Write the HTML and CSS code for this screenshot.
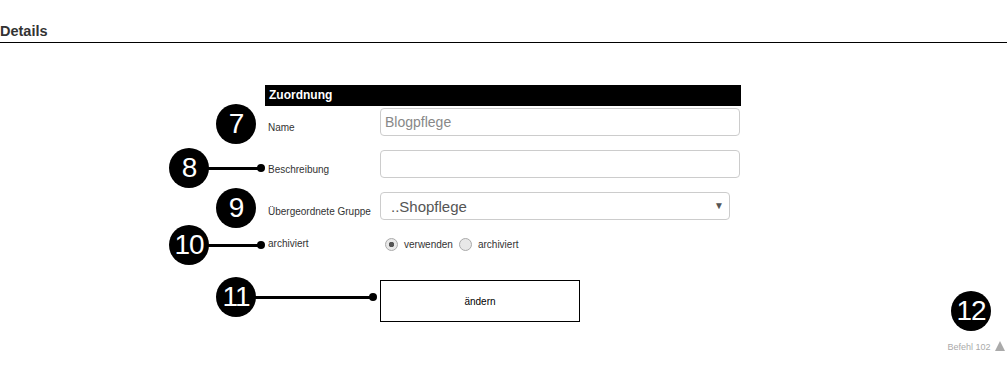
FILE: index.html
```html
<!DOCTYPE html>
<html>

<head>
  <title>Details</title>
  <link rel="stylesheet" href="styles.css">
</head>

<body>
  <div class="page">
    <h2 class="title">Details</h2>

    <div class="form">
      <div class="bar">Zuordnung</div>
      <div class="row">
        <label class="lbl">Name</label>
        <input class="field" type="text" value="Blogpflege">
      </div>
      <div class="row">
        <label class="lbl">Beschreibung</label>
        <input class="field" type="text" value="">
      </div>
      <div class="row">
        <label class="lbl">Übergeordnete Gruppe</label>
        <div class="select-wrap">
          <select class="select">
            <option>..Shopflege</option>
          </select>
        </div>
      </div>
      <div class="row radio-row">
        <label class="lbl">archiviert</label>
        <div class="radios">
          <input type="radio" name="arch" class="radio" checked> <span>verwenden</span>
          <input type="radio" name="arch" class="radio"> <span>archiviert</span>
        </div>
      </div>
      <div class="row button-row">
        <button class="butt">ändern</button>
      </div>
    </div>

    <div class="footer">Befehl 102 <span class="up"></span></div>

    <!-- callouts -->
    <div class="callout c7"><span class="num">7</span></div>
    <div class="callout c8"><span class="num">8</span><span class="line"></span><span class="dot"></span></div>
    <div class="callout c9"><span class="num">9</span></div>
    <div class="callout c10"><span class="num">10</span><span class="line"></span><span class="dot"></span></div>
    <div class="callout c11"><span class="num">11</span><span class="line"></span><span class="dot"></span></div>
    <div class="callout c12"><span class="num">12</span></div>
  </div>
</body>

</html>
```

FILE: styles.css
```css
html,
body {
  margin: 0;
  background-color: #FFFFFF;
  font-family: "Liberation Sans", Arial, sans-serif;
  color: #333333;
}

.page {
  position: relative;
  width: 1007px;
  height: 367px;
  overflow: hidden;
}

.title {
  margin: 0;
  padding: 23px 0 3px 0;
  font-size: 14.5px;
  line-height: 16px;
  font-weight: bold;
  color: #333333;
  border-bottom: 1px solid #000000;
}

.form {
  margin: 42px 0 0 265px;
  width: 476px;
}

.bar {
  height: 21px;
  line-height: 21px;
  background-color: #000000;
  color: #FFFFFF;
  font-size: 12px;
  font-weight: bold;
  padding-left: 4px;
  margin-bottom: 2px;
}

.row {
  display: flex;
  align-items: center;
  height: 28px;
  margin-bottom: 14px;
}

.lbl {
  width: 112px;
  padding-left: 3px;
  padding-top: 10px;
  font-size: 10px;
  color: #333333;
}

.field {
  box-sizing: border-box;
  width: 360px;
  height: 28px;
  margin: 0;
  padding: 0 4px;
  border: 1px solid #cccccc;
  border-radius: 4px;
  font-family: "Liberation Sans", Arial, sans-serif;
  font-size: 14px;
  color: #888888;
  outline: none;
}

.select-wrap {
  position: relative;
  width: 350px;
}

.select-wrap::after {
  content: "\25BC";
  position: absolute;
  right: 6px;
  top: 8px;
  font-size: 10px;
  color: #555555;
}

.select {
  box-sizing: border-box;
  width: 350px;
  height: 28px;
  margin: 0;
  padding: 0 10px;
  border: 1px solid #cccccc;
  border-radius: 4px;
  background: #FFFFFF;
  -webkit-appearance: none;
  appearance: none;
  font-family: "Liberation Sans", Arial, sans-serif;
  font-size: 15px;
  color: #555555;
  outline: none;
}

.radio-row {
  height: 16px;
  margin-top: 16px;
  margin-bottom: 28px;
}

.radio-row .lbl {
  padding-top: 0;
  position: relative;
  top: -1px;
}

.radios {
  display: flex;
  align-items: center;
  padding-left: 5px;
  font-size: 10px;
  color: #333333;
}

.radio {
  -webkit-appearance: none;
  appearance: none;
  box-sizing: border-box;
  width: 13px;
  height: 13px;
  margin: 0 6px 0 0;
  border: 1px solid #aaaaaa;
  border-radius: 50%;
  background: #e8e8e8;
}

.radio:checked {
  background: radial-gradient(circle, #555555 0, #555555 2.5px, #e8e8e8 3px);
}

.radios span {
  margin-right: 6px;
}

.button-row {
  height: 42px;
  margin-bottom: 0;
  padding-left: 115px;
}

.butt {
  box-sizing: border-box;
  width: 200px;
  height: 42px;
  margin: 0;
  background: #FFFFFF;
  border: 1px solid #000000;
  font-family: "Liberation Sans", Arial, sans-serif;
  font-size: 10px;
  color: #000000;
}

.footer {
  margin-top: 19px;
  padding-right: 2px;
  text-align: right;
  font-size: 9px;
  line-height: 12px;
  color: #aaaaaa;
}

.up {
  display: inline-block;
  width: 0;
  height: 0;
  margin-left: 2px;
  border-left: 5.5px solid transparent;
  border-right: 5.5px solid transparent;
  border-bottom: 10px solid #aaaaaa;
  vertical-align: -1px;
}

/* callouts */
.callout {
  position: absolute;
  display: flex;
  align-items: center;
}

.num {
  width: 40px;
  height: 40px;
  border-radius: 50%;
  background: #000000;
  color: #FFFFFF;
  font-size: 28px;
  line-height: 40px;
  text-align: center;
  letter-spacing: -1px;
}

.line {
  height: 3px;
  background: #000000;
  margin-left: -1px;
}

.dot {
  width: 8px;
  height: 8px;
  margin-left: -4px;
  border-radius: 50%;
  background: #000000;
}

.c7 { left: 216px; top: 104px; }
.c8 { left: 169px; top: 148px; }
.c8 .line { width: 53px; }
.c9 { left: 216px; top: 188px; }
.c10 { left: 169px; top: 225px; }
.c10 .line { width: 53px; }
.c11 { left: 216px; top: 277px; }
.c11 .line { width: 118px; }
.c12 { left: 951px; top: 291px; }
```
